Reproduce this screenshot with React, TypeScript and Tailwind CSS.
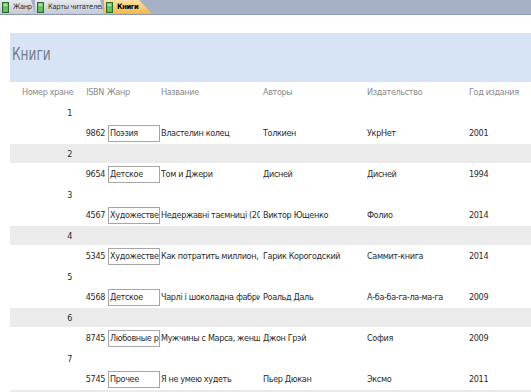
const font = "font-['DejaVu_Sans_Condensed','Liberation_Sans_Narrow','Roboto',sans-serif]";

type Book = {
  id: number;
  isbn: string;
  genre: string;
  title: string;
  author: string;
  publisher: string;
  year: string;
};

const books: Book[] = [
  { id: 1, isbn: "9862", genre: "Поэзия", title: "Властелин колец", author: "Толкиен", publisher: "УкрНет", year: "2001" },
  { id: 2, isbn: "9654", genre: "Детское", title: "Том и Джери", author: "Дисней", publisher: "Дисней", year: "1994" },
  { id: 3, isbn: "4567", genre: "Художественная", title: "Недержавні таємниці (2014)", author: "Виктор Ющенко", publisher: "Фолио", year: "2014" },
  { id: 4, isbn: "5345", genre: "Художественная", title: "Как потратить миллион, который у вас нет", author: "Гарик Корогодский", publisher: "Саммит-книга", year: "2014" },
  { id: 5, isbn: "4568", genre: "Детское", title: "Чарлі і шоколадна фабрика", author: "Роальд Даль", publisher: "А-ба-ба-га-ла-ма-га", year: "2009" },
  { id: 6, isbn: "8745", genre: "Любовные романы", title: "Мужчины с Марса, женщины с Венеры", author: "Джон Грэй", publisher: "София", year: "2009" },
  { id: 7, isbn: "5745", genre: "Прочее", title: "Я не умею худеть", author: "Пьер Дюкан", publisher: "Эксмо", year: "2011" },
  { id: 8, isbn: "", genre: "", title: "", author: "", publisher: "", year: "" },
];

const FormIcon = () => (
  <svg width="7" height="11" viewBox="0 0 7 11" className="shrink-0">
    <rect x="0.5" y="0.5" width="6" height="10" fill="#4caf50" stroke="#2e6b2e" />
    <rect x="1.5" y="1.5" width="4" height="3" fill="#a8e0a0" />
    <rect x="1.5" y="5.5" width="4" height="4" fill="#6cc46a" />
  </svg>
);

const TabBar = () => (
  <div className="flex h-[15px] items-stretch bg-[#a7b1c6] border-b border-[#8e98ae] text-[7.5px] tracking-[-0.35px]">
    <div className="flex items-center gap-[4px] pl-[2px] w-[35px] overflow-hidden bg-gradient-to-b from-[#e6e9ee] to-[#c5cbd6] [clip-path:polygon(0_0,calc(100%_-_4px)_0,100%_100%,0_100%)]">
      <FormIcon />
      <span className="text-[#333] whitespace-nowrap">Жанр</span>
    </div>
    <div className="flex items-center gap-[4px] pl-[2px] w-[69px] overflow-hidden bg-gradient-to-b from-[#e6e9ee] to-[#c5cbd6] [clip-path:polygon(0_0,calc(100%_-_4px)_0,100%_100%,0_100%)]">
      <FormIcon />
      <span className="text-[#333] whitespace-nowrap">Карты читателей</span>
    </div>
    <div className="flex items-center gap-[4px] pl-[2px] w-[48px] overflow-hidden bg-gradient-to-b from-[#fde3a4] to-[#f4b648] [clip-path:polygon(0_0,calc(100%_-_13px)_0,100%_100%,0_100%)]">
      <FormIcon />
      <span className="font-bold text-black whitespace-nowrap">Книги</span>
    </div>
  </div>
);

const Cell = ({ w, children, right }: { w: string; children?: React.ReactNode; right?: boolean }) => (
  <div className={`${w} shrink-0 overflow-hidden whitespace-nowrap ${right ? "text-right pr-[2px]" : ""}`}>{children}</div>
);

// text field: clipped a little before the next column starts
const Field = ({ w, children }: { w: string; children?: React.ReactNode }) => (
  <div className={`${w} shrink-0 pr-[3px] leading-[17px]`}>
    <div className="overflow-hidden whitespace-nowrap">{children}</div>
  </div>
);

export default function App() {
  return (
    <div className={`${font} h-[392px] w-[531px] overflow-hidden bg-white`}>
      <TabBar />
      <div className="ml-[10px] mt-[18px]">
        <div className="h-[49px] bg-[#d7e4f6] pl-[2px] pt-[10px]">
          <h1 className="origin-left scale-x-75 text-[18px] leading-[22px] text-[#6f7b8c]">Книги</h1>
        </div>
        <div className="flex h-[21px] items-center pt-[1px] text-[9px] tracking-[-0.35px] text-[#8a8a8a]">
          <div className="w-[64px] shrink-0 overflow-hidden whitespace-nowrap pl-[12px]">Номер хранения</div>
          <Cell w="w-[32px]" right>ISBN</Cell>
          <div className="w-[55px] shrink-0 pl-[1px]">Жанр</div>
          <Cell w="w-[102px]">Название</Cell>
          <Cell w="w-[104px]">Авторы</Cell>
          <Cell w="w-[102px]">Издательство</Cell>
          <Cell w="flex-1">Год издания</Cell>
        </div>
        {books.map((b) => (
          <div key={b.id} className="text-[9px] tracking-[-0.35px] text-[#2b2b2b]">
            <div className={`flex h-[19px] items-center pt-[2px] ${b.id % 2 === 0 ? "bg-[#ebebeb]" : ""}`}>
              <Cell w="w-[64px]" right>{b.id}</Cell>
            </div>
            <div className="flex h-[22px] items-start pt-[3px]">
              <Cell w="w-[64px]" />
              <div className="w-[32px] shrink-0 text-right pr-[1px] leading-[17px]">{b.isbn}</div>
              <div className="w-[55px] shrink-0 pl-[2px]">
                {b.id < 8 && (
                  <div className="h-[17px] w-[52px] overflow-hidden whitespace-nowrap border border-[#a6a6a6] bg-white pl-[1px] leading-[15px]">
                    {b.genre}
                  </div>
                )}
              </div>
              <Field w="w-[102px]">{b.title}</Field>
              <Field w="w-[104px]">{b.author}</Field>
              <Field w="w-[102px]">{b.publisher}</Field>
              <div className="flex-1 overflow-hidden whitespace-nowrap leading-[17px]">{b.year}</div>
            </div>
          </div>
        ))}
      </div>
    </div>
  );
}
